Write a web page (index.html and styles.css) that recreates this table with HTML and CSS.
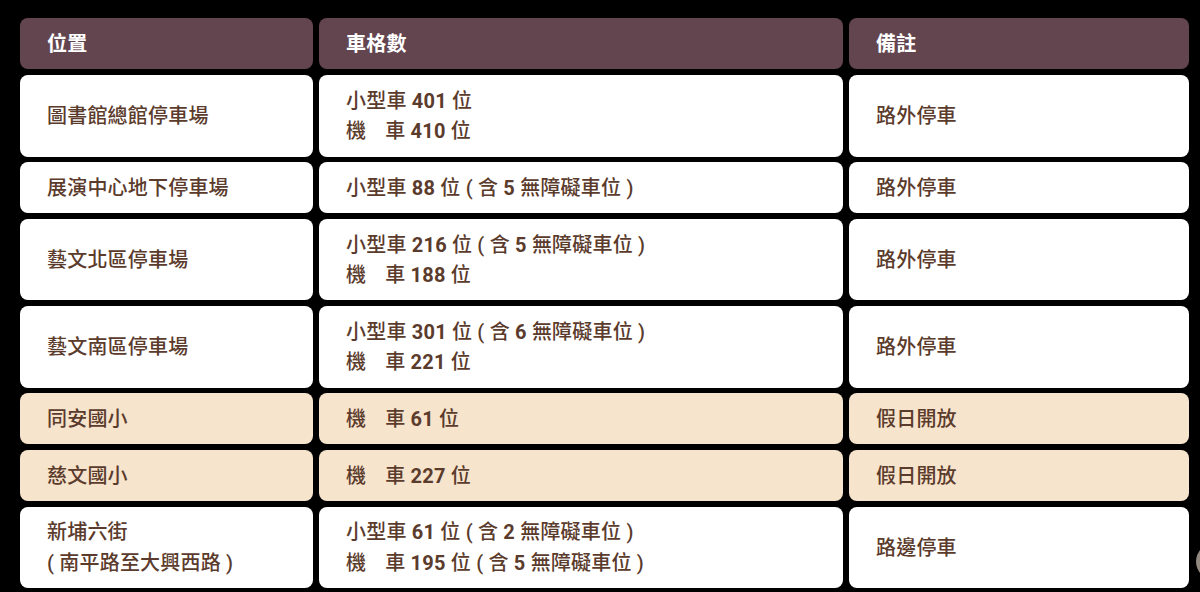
FILE: index.html
```html
<!DOCTYPE html>
<html lang="zh-Hant">
<head>
<meta charset="utf-8">
<title>停車資訊</title>
<link rel="stylesheet" href="styles.css">
</head>
<body>
<div class="parking">
  <div class="cell head">位置</div>
  <div class="cell head">車格數</div>
  <div class="cell head">備註</div>

  <div class="cell">圖書館總館停車場</div>
  <div class="cell"><div>小型車 <b>401</b> 位<br>機<span class="gap"></span>車 <b>410</b> 位</div></div>
  <div class="cell">路外停車</div>

  <div class="cell">展演中心地下停車場</div>
  <div class="cell"><div>小型車 <b>88</b> 位 ( 含 <b>5</b> 無障礙車位 )</div></div>
  <div class="cell">路外停車</div>

  <div class="cell">藝文北區停車場</div>
  <div class="cell"><div>小型車 <b>216</b> 位 ( 含 <b>5</b> 無障礙車位 )<br>機<span class="gap"></span>車 <b>188</b> 位</div></div>
  <div class="cell">路外停車</div>

  <div class="cell">藝文南區停車場</div>
  <div class="cell"><div>小型車 <b>301</b> 位 ( 含 <b>6</b> 無障礙車位 )<br>機<span class="gap"></span>車 <b>221</b> 位</div></div>
  <div class="cell">路外停車</div>

  <div class="cell alt">同安國小</div>
  <div class="cell alt"><div>機<span class="gap"></span>車 <b>61</b> 位</div></div>
  <div class="cell alt">假日開放</div>

  <div class="cell alt">慈文國小</div>
  <div class="cell alt"><div>機<span class="gap"></span>車 <b>227</b> 位</div></div>
  <div class="cell alt">假日開放</div>

  <div class="cell"><div>新埔六街<br>( 南平路至大興西路 )</div></div>
  <div class="cell"><div>小型車 <b>61</b> 位 ( 含 <b>2</b> 無障礙車位 )<br>機<span class="gap"></span>車 <b>195</b> 位 ( 含 <b>5</b> 無障礙車位 )</div></div>
  <div class="cell">路邊停車</div>
</div>
<div class="to-top"></div>
</body>
</html>
```
FILE: styles.css
```css
html, body {
  margin: 0;
  padding: 0;
  background: #000;
  overflow: hidden;
}
body {
  font-family: Roboto, "Noto Sans CJK TC", sans-serif;
  font-size: 20px;
  color: #5b3b2c;
}
.parking {
  display: grid;
  grid-template-columns: 293px 524px 340px;
  column-gap: 6px;
  row-gap: 5.7px;
  padding: 18.3px 0 0 20px;
}
.cell {
  display: flex;
  align-items: center;
  background: #fff;
  border-radius: 8px;
  padding: 10.6px 20px 9.8px 27px;
  line-height: 30.6px;
  font-weight: 500;
  letter-spacing: 0.2px;
}
.cell b {
  font-weight: 700;
}
.gap {
  display: inline-block;
  width: 19px;
}
.head {
  background: #634550;
  color: #fff;
  font-weight: 700;
}
.alt {
  background: #f7e4cd;
}
.to-top {
  position: fixed;
  right: -33px;
  top: 543px;
  width: 37px;
  height: 37px;
  border-radius: 50%;
  background: rgba(170, 160, 150, 0.85);
}
```
